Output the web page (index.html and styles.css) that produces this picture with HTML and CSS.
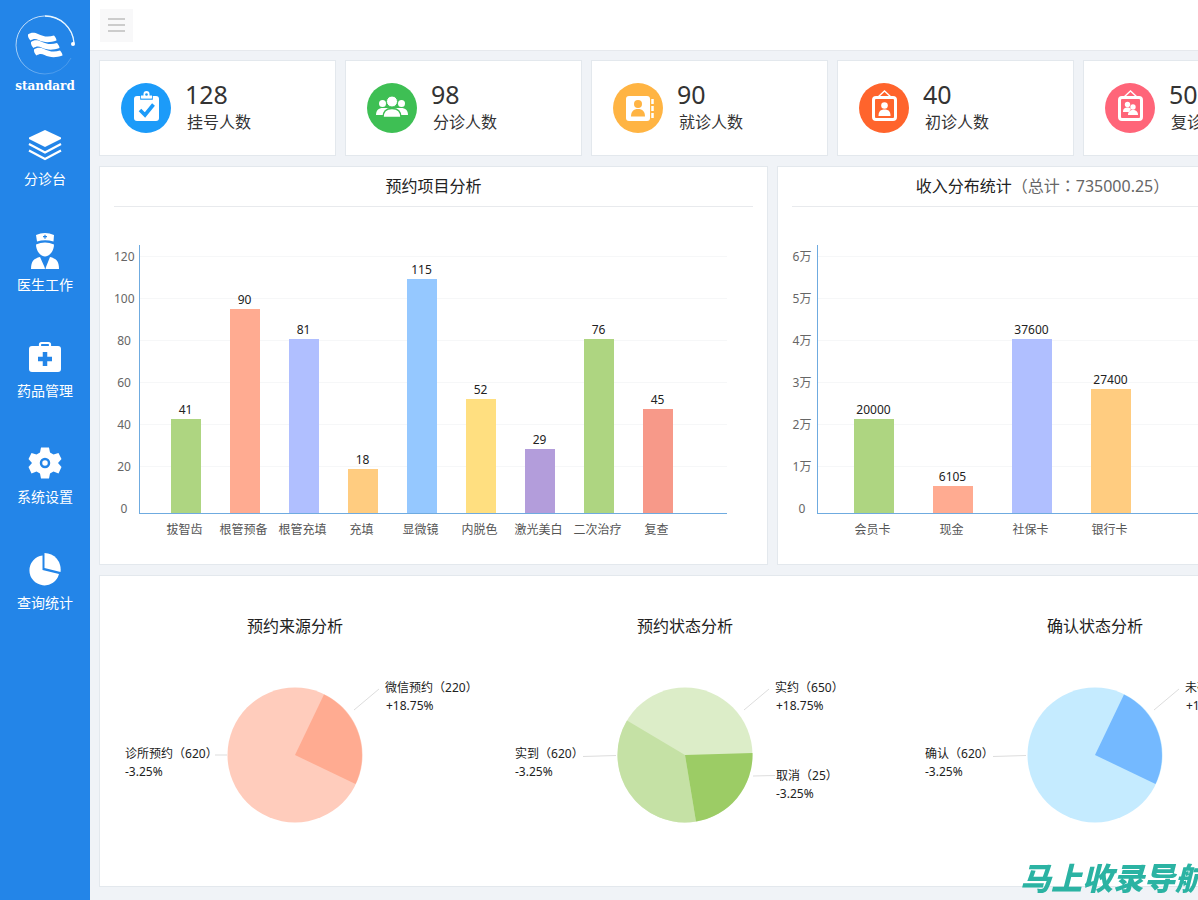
FILE: index.html
```html
<!DOCTYPE html>
<html lang="zh-CN">
<head>
<meta charset="utf-8">
<meta name="viewport" content="width=device-width, initial-scale=1">
<title>查询统计</title>
<link rel="stylesheet" href="styles.css">
</head>
<body>
<div class="app">
  <aside class="sidebar">
    <div class="logo">
      <svg class="logo-mark" width="62" height="62" viewBox="0 0 62 62" fill="none">
        <defs>
          <linearGradient id="ring" x1="0.1" y1="0.2" x2="0.7" y2="1">
            <stop offset="0" stop-color="#fff" stop-opacity=".75"/>
            <stop offset="1" stop-color="#fff" stop-opacity=".15"/>
          </linearGradient>
        </defs>
        <path d="M60 30A29 29 0 1 0 31 60A29 29 0 0 0 57 44" stroke="url(#ring)"/>
        <path d="M31 2A29 29 0 0 1 60 29" stroke="#e8f6ff" stroke-width="1.300"/>
        <circle cx="59" cy="30" r="2" fill="#fff"/>
        <g fill="#fff">
          <path id="wave" d="M14 20.500c3-2.500 7-2 10-.5 5 2.500 10 3.500 16 1.500 1 1 2.500 3 2.500 5-7 2.500-13 2-18-.5-3-1.500-5-1.500-8 .5-1.500-1.500-3-4-2.500-6z"/>
          <use href="#wave" x="3" y="7.500"/>
          <use href="#wave" x="6" y="15"/>
        </g>
      </svg>
      <span class="logo-name">standard</span>
    </div>
    <nav class="nav">
      <a class="nav-item" href="#">
        <svg width="36" height="36" viewBox="0 0 36 36" fill="#fff">
          <path d="M18 3 L34 10.500 V12 L18 20 L2 12 V10.500Z"/>
          <path d="M2 17 L18 25.500 L34 17 M2 23.500 L18 32 L34 23.500" fill="none" stroke="#fff" stroke-width="2.200"/>
        </svg>
        <span>分诊台</span>
      </a>
      <a class="nav-item" href="#">
        <svg width="36" height="36" viewBox="0 0 36 36" fill="#fff">
          <path d="M9 2 Q18-2 27 2 L26.500 8.500 Q18 6 10 8.500Z"/>
          <path d="M18 1.700v4M16 3.700h4" stroke="#2385e8" stroke-width="1.200"/>
          <path d="M9 11.500 Q18 7.500 27 11.500 C27 18 22.500 23.500 18 23.500 C13.500 23.500 9 18 9 11.500Z"/>
          <path d="M4 36 C4 28 7 25.500 13 24 L17.500 34 L18 36Z M32 36 C32 28 29 25.500 23 24 L19 34 L18.500 36Z"/>
        </svg>
        <span>医生工作</span>
      </a>
      <a class="nav-item" href="#">
        <svg width="36" height="36" viewBox="0 0 36 36" fill="#fff">
          <rect x="2" y="7" width="32" height="26" rx="3"/>
          <path d="M13 8V5.500Q13 4 14.500 4h7Q23 4 23 5.500V8" fill="none" stroke="#fff" stroke-width="2.200"/>
          <path d="M18 13v14M11 20h14" stroke="#2385e8" stroke-width="4.500"/>
        </svg>
        <span>药品管理</span>
      </a>
      <a class="nav-item" href="#">
        <svg width="36" height="36" viewBox="0 0 36 36">
          <path d="M14 2.500h8l1 5 3.500 2 5-1.500 3 6-3.500 4 3.500 4-3 6.500-5-2-3.500 2-1 5h-8l-1-5-3.500-2-5 2-3-6.500 3.500-4-3.500-4 3-6 5 1.500 3.500-2z" fill="#fff"/>
          <circle cx="18" cy="18" r="4" fill="#fff" stroke="#2385e8" stroke-width="2.500"/>
        </svg>
        <span>系统设置</span>
      </a>
      <a class="nav-item" href="#">
        <svg width="36" height="36" viewBox="0 0 36 36" fill="#fff">
          <path d="M15.500 4.500A15 15 0 1 0 32 23L15.500 19Z"/>
          <path d="M17.500 2A16.500 16.500 0 0 1 33.500 21L17.500 17Z"/>
        </svg>
        <span>查询统计</span>
      </a>
    </nav>
  </aside>

  <div class="page">
    <header class="topbar">
      <button class="menu-button" type="button" aria-label="菜单"><i></i><i></i><i></i></button>
    </header>

    <main class="content">
      <section class="stats">
        <article class="card stat">
          <svg class="stat-icon" viewBox="0 0 50 50">
            <circle cx="25" cy="25" r="25" fill="#1c9bf9"/>
            <rect x="13" y="13" width="25" height="25" rx="3" fill="#fff"/>
            <path d="M20 16V12.500h2.500a3 3 0 0 1 6 0H31V16Z" fill="#fff" stroke="#1c9bf9" stroke-width="1.600"/>
            <path d="M20 15.500V12.500h2.500V11a3 3 0 0 1 6 0v1.500H31v3Z" fill="#fff"/>
            <circle cx="25.500" cy="11.500" r="1.300" fill="#1c9bf9"/>
            <path d="M19 27l5 5 8.500-10.500" fill="none" stroke="#1c9bf9" stroke-width="3.600"/>
          </svg>
          <p class="stat-text"><strong>128</strong><span>挂号人数</span></p>
        </article>
        <article class="card stat">
          <svg class="stat-icon" viewBox="0 0 50 50">
            <circle cx="25" cy="25" r="25" fill="#3ebf54"/>
            <g fill="#fff">
              <circle cx="15.500" cy="20.500" r="3.500"/><circle cx="34.500" cy="20.500" r="3.500"/>
              <path d="M9 32c0-4.500 2.500-7 7-7h18c4.500 0 7 2.500 7 7Z"/>
            </g>
            <path d="M16 34.500c0-6.500 3-9 9-9s9 2.500 9 9Z" fill="#fff" stroke="#3ebf54" stroke-width="1.400"/>
            <circle cx="25" cy="18.500" r="5.500" fill="#fff" stroke="#3ebf54"/>
          </svg>
          <p class="stat-text"><strong>98</strong><span>分诊人数</span></p>
        </article>
        <article class="card stat">
          <svg class="stat-icon" viewBox="0 0 50 50">
            <circle cx="25" cy="25" r="25" fill="#ffb443"/>
            <rect x="13" y="13" width="24" height="25" rx="3" fill="#fff"/>
            <path d="M39.500 16v5M39.500 23v5M39.500 30v5" stroke="#fff" stroke-width="2.500"/>
            <circle cx="25" cy="21" r="4" fill="#ffb443"/>
            <path d="M18 33.500c0-5 2.500-7.500 7-7.500s7 2.500 7 7.500Z" fill="#ffb443"/>
          </svg>
          <p class="stat-text"><strong>90</strong><span>就诊人数</span></p>
        </article>
        <article class="card stat">
          <svg class="stat-icon" viewBox="0 0 50 50">
            <circle cx="25" cy="25" r="25" fill="#ff642c"/>
            <path d="M19 14l6.500-6 6.500 6" fill="none" stroke="#fff" stroke-width="1.400"/>
            <rect x="14.500" y="14.500" width="22" height="22" rx="2.500" fill="none" stroke="#fff" stroke-width="3"/>
            <circle cx="25.500" cy="22.500" r="3.300" fill="#fff"/>
            <path d="M19.500 33c0-4.500 2-6.500 6-6.500s6 2 6 6.500Z" fill="#fff"/>
          </svg>
          <p class="stat-text"><strong>40</strong><span>初诊人数</span></p>
        </article>
        <article class="card stat">
          <svg class="stat-icon" viewBox="0 0 50 50">
            <circle cx="25" cy="25" r="25" fill="#ff6579"/>
            <path d="M19 14l6.500-6 6.500 6" fill="none" stroke="#fff" stroke-width="1.400"/>
            <rect x="14.500" y="14.500" width="22" height="22" rx="2.500" fill="none" stroke="#fff" stroke-width="3"/>
            <g fill="#fff">
              <circle cx="22.500" cy="21.500" r="2.700"/><path d="M18 29c0-3.500 2-4.500 4.500-4.500 2 0 3 .6 3.500 1.500l-2 3Z"/>
              <circle cx="28" cy="24" r="2.700"/><path d="M23 32c0-3.500 2-5 5-5s5 1.500 5 5Z"/>
            </g>
          </svg>
          <p class="stat-text"><strong>50</strong><span>复诊人数</span></p>
        </article>
      </section>

      <section class="charts">
        <article class="card panel">
          <h2 class="panel-title">预约项目分析</h2>
          <div class="chart chart-items">
            <ol class="ticks"><li>120</li><li>100</li><li>80</li><li>60</li><li>40</li><li>20</li><li>0</li></ol>
            <div class="plot">
              <div class="col"><span>41</span><i class="bar green" style="height:94px"></i></div>
              <div class="col"><span>90</span><i class="bar salmon" style="height:204px"></i></div>
              <div class="col"><span>81</span><i class="bar indigo" style="height:174px"></i></div>
              <div class="col"><span>18</span><i class="bar orange" style="height:44px"></i></div>
              <div class="col"><span>115</span><i class="bar blue" style="height:234px"></i></div>
              <div class="col"><span>52</span><i class="bar yellow" style="height:114px"></i></div>
              <div class="col"><span>29</span><i class="bar purple" style="height:64px"></i></div>
              <div class="col"><span>76</span><i class="bar green" style="height:174px"></i></div>
              <div class="col"><span>45</span><i class="bar coral" style="height:104px"></i></div>
            </div>
            <ol class="names"><li>拔智齿</li><li>根管预备</li><li>根管充填</li><li>充填</li><li>显微镜</li><li>内脱色</li><li>激光美白</li><li>二次治疗</li><li>复查</li></ol>
          </div>
        </article>
        <article class="card panel">
          <h2 class="panel-title">收入分布统计<span class="total"><span class="fw" lang="zh-TW">（</span>总计<span class="fw" lang="zh-TW">：</span>735000.25<span class="fw" lang="zh-TW">）</span></span></h2>
          <div class="chart chart-income">
            <ol class="ticks"><li>6万</li><li>5万</li><li>4万</li><li>3万</li><li>2万</li><li>1万</li><li>0</li></ol>
            <div class="plot">
              <div class="col"><span>20000</span><i class="bar green" style="height:94px"></i></div>
              <div class="col"><span>6105</span><i class="bar salmon" style="height:27px"></i></div>
              <div class="col"><span>37600</span><i class="bar indigo" style="height:174px"></i></div>
              <div class="col"><span>27400</span><i class="bar orange" style="height:124px"></i></div>
            </div>
            <ol class="names"><li>会员卡</li><li>现金</li><li>社保卡</li><li>银行卡</li></ol>
          </div>
        </article>
      </section>

      <section class="card pies">
        <article class="pie">
          <h2 class="pie-title">预约来源分析</h2>
          <svg class="pie-chart" width="390" height="170" viewBox="0 0 390 170">
            <circle cx="195" cy="84" r="67.500" fill="#ffccbc"/>
            <path d="M195 84L224 23.500A67.500 67.500 0 0 1 255.500 113Z" fill="#ffab91"/>
            <path class="leader" d="M254 39L279 18M115 84H127"/>
            <text x="285" y="21">微信预约<tspan class="fw" lang="zh-TW">（</tspan>220<tspan class="fw" lang="zh-TW">）</tspan></text>
            <text x="286" y="39">+18.75%</text>
            <text x="25" y="87">诊所预约<tspan class="fw" lang="zh-TW">（</tspan>620<tspan class="fw" lang="zh-TW">）</tspan></text>
            <text x="25" y="105">-3.25%</text>
          </svg>
        </article>
        <article class="pie">
          <h2 class="pie-title">预约状态分析</h2>
          <svg class="pie-chart" width="390" height="170" viewBox="0 0 390 170">
            <circle cx="195" cy="84" r="67.500" fill="#dcedc8"/>
            <path d="M195 84L206 150.600A67.500 67.500 0 0 1 137 49.500Z" fill="#c5e1a5"/>
            <path d="M195 84L262.500 82A67.500 67.500 0 0 1 206 150.600Z" fill="#9ccc65"/>
            <path class="leader" d="M254 39L279 18M93 85.500L126 84.500M263 105L285 104.500"/>
            <text x="285" y="21">实约<tspan class="fw" lang="zh-TW">（</tspan>650<tspan class="fw" lang="zh-TW">）</tspan></text>
            <text x="286" y="39">+18.75%</text>
            <text x="25" y="87">实到<tspan class="fw" lang="zh-TW">（</tspan>620<tspan class="fw" lang="zh-TW">）</tspan></text>
            <text x="25" y="105">-3.25%</text>
            <text x="286" y="109">取消<tspan class="fw" lang="zh-TW">（</tspan>25<tspan class="fw" lang="zh-TW">）</tspan></text>
            <text x="286" y="127">-3.25%</text>
          </svg>
        </article>
        <article class="pie">
          <h2 class="pie-title">确认状态分析</h2>
          <svg class="pie-chart" width="390" height="170" viewBox="0 0 390 170">
            <circle cx="195" cy="84" r="67.500" fill="#c5ebff"/>
            <path d="M195 84L224 23.500A67.500 67.500 0 0 1 255.500 113Z" fill="#74b9ff"/>
            <path class="leader" d="M254 39L279 18M93 85.500L126 84.500"/>
            <text x="285" y="21">未确认<tspan class="fw" lang="zh-TW">（</tspan>220<tspan class="fw" lang="zh-TW">）</tspan></text>
            <text x="286" y="39">+18.75%</text>
            <text x="25" y="87">确认<tspan class="fw" lang="zh-TW">（</tspan>620<tspan class="fw" lang="zh-TW">）</tspan></text>
            <text x="25" y="105">-3.25%</text>
          </svg>
        </article>
      </section>
    </main>
  </div>
</div>
<div class="watermark">马上收录导航</div>
</body>
</html>
```

FILE: styles.css
```css
* { box-sizing: border-box; }

body {
  margin: 0;
  overflow-x: hidden;
  background: #f0f3f7;
  color: #222;
  font-family: "Noto Sans", "Noto Sans CJK SC", sans-serif;
  font-size: 12px;
}

h2, p, ol { margin: 0; padding: 0; font-weight: 400; }
ol { list-style: none; }

/* centred full-width punctuation */
.fw {
  font-family: "Noto Sans CJK TC", sans-serif;
  line-height: 1;
}

.app {
  display: flex;
  min-height: 100vh;
  overflow: hidden;
}

/* sidebar */
.sidebar {
  flex: 0 0 90px;
  background: #2385e8;
  color: #fff;
}

.logo {
  display: flex;
  flex-direction: column;
  align-items: center;
  padding-top: 14px;
}

.logo-mark { display: block; }

.logo-name {
  font: bold 12px/20px "DejaVu Serif", serif;
}

.nav {
  display: flex;
  flex-direction: column;
  gap: 45px;
  padding-top: 31px;
}

.nav-item {
  display: flex;
  flex-direction: column;
  align-items: center;
  gap: 7px;
  color: #fff;
  font-size: 14px;
  line-height: 18px;
  text-decoration: none;
}

/* top bar */
.page { flex: 1; min-width: 0; }

.topbar {
  display: flex;
  align-items: center;
  height: 51px;
  padding-left: 10px;
  background: #fff;
  border-bottom: 1px solid #e6e9ed;
}

.menu-button {
  display: flex;
  flex-direction: column;
  justify-content: center;
  align-items: center;
  gap: 4px;
  width: 33px;
  height: 33px;
  padding: 0;
  border: 0;
  background: #f8f8f9;
}

.menu-button i {
  width: 17px;
  height: 2px;
  background: #ccc;
}

/* content */
.content {
  display: flex;
  flex-direction: column;
  gap: 10px;
  min-width: 1239px;
  padding: 9px 9px 13px;
}

.card {
  background: #fff;
  border: 1px solid #e3e8ed;
}

.stats {
  display: grid;
  grid-template-columns: repeat(5, 1fr);
  gap: 9px;
}

.stat {
  display: flex;
  align-items: center;
  gap: 14px;
  height: 96px;
  padding-left: 21px;
}

.stat-icon { width: 50px; height: 50px; }

.stat-text {
  display: flex;
  flex-direction: column;
  color: #333;
}

.stat-text strong {
  font-size: 25px;
  font-weight: 400;
  line-height: 28px;
}

.stat-text span {
  padding-left: 2px;
  font-size: 16px;
  line-height: 28px;
}

.charts {
  display: grid;
  grid-template-columns: 669fr 543fr;
  gap: 9px;
}

.panel { padding: 0 14px 25px; }

.panel-title {
  border-bottom: 1px solid #e8eaed;
  font-size: 16px;
  line-height: 39px;
  text-align: center;
}

.total {
  margin-right: 12px;
  color: #666;
}

.chart {
  display: grid;
  grid-template-columns: 20px 1fr;
  grid-template-rows: 278px auto;
  column-gap: 5px;
  padding: 29px 26px 0 0;
}

.chart-items { --step: 59px; --bar: 30px; }
.chart-income { --step: 79px; --bar: 40px; }

.ticks {
  grid-row: 1 / 3;
  color: #666;
  line-height: 42px;
  text-align: center;
  white-space: nowrap;
}

.plot {
  display: flex;
  align-items: flex-end;
  margin-top: 9px;
  padding-left: 16px;
  border: solid #6fabe0;
  border-width: 0 0 1px 1px;
  background:
    linear-gradient(#fff, #fff) 0 100% / 100% 10px no-repeat,
    linear-gradient(#f6f7f8 1px, transparent 1px) 0 11px / 100% 42px;
}

.col {
  display: flex;
  flex-direction: column;
  align-items: center;
  width: var(--step);
  line-height: 18px;
}

.bar { width: var(--bar); }

.names {
  display: flex;
  grid-column: 2;
  padding: 7px 0 0 16px;
  color: #555;
  line-height: 18px;
  text-align: center;
}

.names li { width: var(--step); }

.green { background: #aed581; }
.salmon { background: #ffab91; }
.indigo { background: #b0bfff; }
.orange { background: #ffcc80; }
.blue { background: #95c8ff; }
.yellow { background: #ffdf80; }
.purple { background: #b39ddb; }
.coral { background: #f79989; }

/* pies */
.pies {
  display: grid;
  grid-template-columns: 390fr 390fr 430fr;
  padding: 38px 9px 45px 0;
}

.pie {
  display: flex;
  flex-direction: column;
  align-items: center;
  gap: 33px;
}

.pie-title {
  font-size: 16px;
  line-height: 24px;
}

.pie-chart { overflow: visible; fill: #222; }
.leader { fill: none; stroke: #ddd; }

.watermark {
  position: fixed;
  right: -8px;
  bottom: 5px;
  color: #2bb3a3;
  font: italic 900 31px/36px "Noto Sans CJK SC", sans-serif;
}
```
